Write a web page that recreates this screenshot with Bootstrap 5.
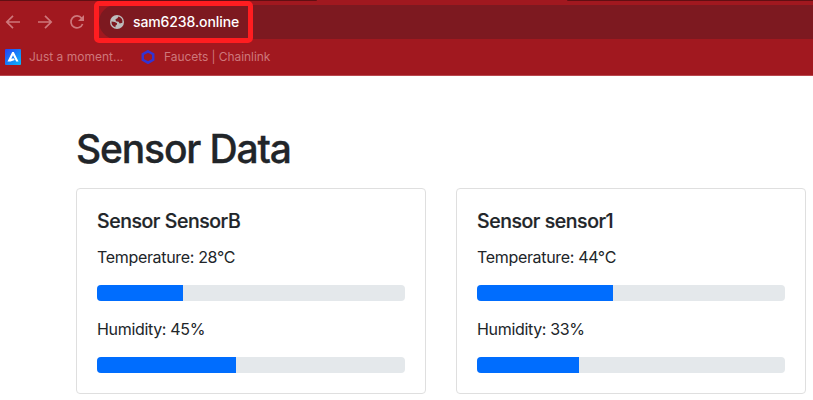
<!DOCTYPE html>
<html lang="en">
<head>
<meta charset="utf-8">
<meta name="viewport" content="width=device-width, initial-scale=1">
<title>Sensor Data</title>
<link href="https://cdn.jsdelivr.net/npm/bootstrap@5.3.0/dist/css/bootstrap.min.css" rel="stylesheet">
<style>
body { font-family: Inter, "Liberation Sans", sans-serif; color: #212529; overflow: hidden; }
.browser { height: 76px; background: #a1181f; border-bottom: 1px solid #b9474d; color: #ce777b; }
.tab-strip { height: 1px; }
.tab-strip div { background: #610f13; }
.tab-left { width: 317px; border-bottom-right-radius: 2px; }
.tab-right { width: 246px; border-bottom-left-radius: 2px; }
.toolbar { height: 42px; padding-left: 5px; }
.toolbar .nav-icons { gap: 16px; width: 94px; }
.address { height: 34px; background: #7d1920; border-radius: 17px 0 0 17px; padding-left: 11px; gap: 9px; color: #fff; }
.address span { font-size: 14px; font-weight: 500; letter-spacing: -.1px; line-height: 20px; margin-top: -1px; }
.highlight { left: 94px; top: 1px; width: 159px; height: 42px; border: 5px solid #ff1d20; border-radius: 5px; }
.bookmarks { height: 28px; padding-left: 5px; font-size: 12px; }
.bookmarks .first { width: 135px; }
.bookmarks .last { letter-spacing: -.06px; }
.page { padding: 49px 7px 0 76px; }
.page h1 { font-size: 40px; font-weight: 500; letter-spacing: -1.15px; -webkit-text-stroke: .35px; font-size: 39px; line-height: 48px; margin-bottom: 15px; }
.sensors { --bs-gutter-x: 30px; }
.sensor { --bs-card-border-radius: 4px; --bs-card-inner-border-radius: 3px; --bs-card-border-color: #dfdfdf; --bs-card-spacer-x: 20px; --bs-card-spacer-y: 20px; }
.sensor .card-title { font-size: 19.5px; line-height: 24px; font-weight: 500; -webkit-text-stroke: .2px; margin-bottom: 12px; letter-spacing: -.44px; }
.sensor .card-text { letter-spacing: -.33px; margin-bottom: 16px; }
.sensor .progress { --bs-progress-bg: #e4e8eb; --bs-progress-border-radius: 4px; --bs-progress-bar-bg: #006dfe; height: 16px; }
</style>
</head>
<body>
<header class="browser position-relative">
  <div class="tab-strip d-flex justify-content-between"><div class="tab-left"></div><div class="tab-right"></div></div>
  <div class="toolbar d-flex align-items-center">
    <div class="nav-icons d-flex flex-shrink-0">
      <svg width="16" height="16" viewBox="0 0 16 16" fill="none" stroke="currentColor" stroke-width="1.7"><path d="M15 8H2M8 1.8 1.8 8 8 14.2"/></svg>
      <svg width="16" height="16" viewBox="0 0 16 16" fill="none" stroke="currentColor" stroke-width="1.7"><path d="M1 8h13M8 1.8 14.2 8 8 14.2"/></svg>
      <svg width="16" height="16" viewBox="0 0 16 16" fill="none" stroke="currentColor" stroke-width="1.7"><path d="M13.600 10A6 6 0 1 1 12.700 4.200L14 5.600"/><path d="M15 1v6H9z" fill="currentColor" stroke="none"/></svg>
    </div>
    <div class="address d-flex align-items-center flex-grow-1">
      <svg width="14" height="14" viewBox="0 0 14 14"><circle cx="7" cy="7" r="7" fill="#bdbdbd"/><path d="M8.500 1.600 7.400 3.300 5.500 4.300l.4 1.900 2.700.5 1.100 1.800 2.700-.8a5.600 5.600 0 0 0-3.900-6.100zM1.500 6.600l3.300.3 2.300 1.300-.3 1.500-1.400 1 .2 1.600A5.600 5.600 0 0 1 1.500 6.600z" fill="#7d1920"/></svg>
      <span>sam6238.online</span>
    </div>
  </div>
  <div class="highlight position-absolute"></div>
  <div class="bookmarks d-flex align-items-center">
    <div class="first d-flex align-items-center gap-2">
      <svg width="16" height="16" viewBox="0 0 16 16"><defs><linearGradient id="blue" x2="1" y2="1"><stop stop-color="#2741f5"/><stop offset="1" stop-color="#08b9fb"/></linearGradient></defs><rect width="16" height="16" rx="1" fill="url(#blue)"/><path d="M7.200 3h1.600l4.700 9.500h-2.300L8 6.200 6.300 9.800 8.600 9.300l1.200 1.700-4.300 1.500h-3z" fill="#fff"/></svg>
      <span>Just a moment...</span>
    </div>
    <div class="last d-flex align-items-center gap-2">
      <svg width="16" height="16" viewBox="0 0 16 16" fill="none" stroke="#3333d3" stroke-width="2.500"><path d="m8 2.300 5.200 2.900v5.600L8 13.700l-5.200-2.900V5.200z"/></svg>
      <span>Faucets | Chainlink</span>
    </div>
  </div>
</header>
<main class="page">
  <h1>Sensor Data</h1>
  <div class="row sensors">
    <div class="col-6">
      <div class="card sensor"><div class="card-body">
        <h5 class="card-title">Sensor SensorB</h5>
        <p class="card-text">Temperature: 28°C</p>
        <div class="progress mb-3"><div class="progress-bar" style="width:28%"></div></div>
        <p class="card-text">Humidity: 45%</p>
        <div class="progress"><div class="progress-bar" style="width:45%"></div></div>
      </div></div>
    </div>
    <div class="col-6">
      <div class="card sensor"><div class="card-body">
        <h5 class="card-title">Sensor sensor1</h5>
        <p class="card-text">Temperature: 44°C</p>
        <div class="progress mb-3"><div class="progress-bar" style="width:44%"></div></div>
        <p class="card-text">Humidity: 33%</p>
        <div class="progress"><div class="progress-bar" style="width:33%"></div></div>
      </div></div>
    </div>
  </div>
</main>
<script src="https://cdn.jsdelivr.net/npm/bootstrap@5.3.0/dist/js/bootstrap.bundle.min.js"></script>
</body>
</html>
